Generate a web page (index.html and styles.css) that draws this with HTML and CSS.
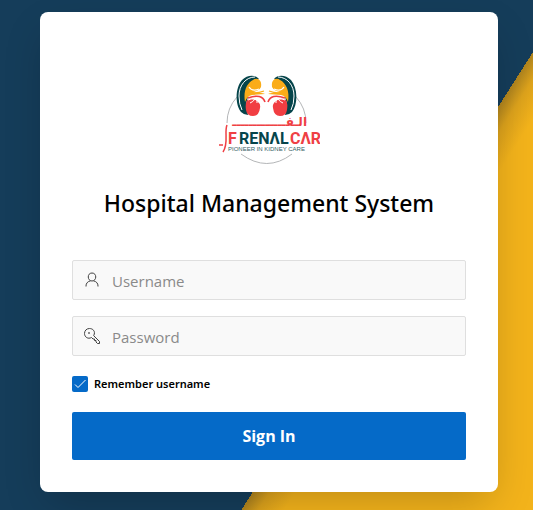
FILE: index.html
```html
<!DOCTYPE html>
<html lang="en">
<head>
<meta charset="utf-8">
<meta name="viewport" content="width=device-width, initial-scale=1">
<title>Hospital Management System</title>
<link rel="stylesheet" href="styles.css">
</head>
<body>
<main class="page">
  <form class="card">
    <svg class="logo" viewBox="0 0 101 92" role="img" aria-label="Renal Care">
      <g fill="none" stroke="#b4b6b8">
        <path d="M18 23Q8 34 8 49M77 23Q87 34 87 49"/>
        <path d="M22 80Q48 99 73 80"/>
      </g>
      <g id="kidney">
        <path fill="#06454b" d="M40 5C36 0 28 1 23 6C16 14 16 31 22 38Q25 41 29 41L27 30L33 8Z"/>
        <path fill="none" stroke="#fff" stroke-width="1" d="M36 3C27 3 20 11 20 22Q20 30 23 36"/>
        <path fill="#faac18" d="M34 6C28 9 24 17 26 28Q28 22 33 21L46 20Q44 19 42 19Q37 19 34 18Q40 17 42 13Q43 7 39 5Q36 4 34 6Z"/>
        <path fill="none" stroke="#fff" stroke-width="1.2" d="M30 13Q33 18 40 15"/>
        <path fill="none" stroke="#faac18" stroke-width="1.2" d="M30 18Q37 20 45 17"/>
        <path fill="#f13e42" d="M28 26Q33 23 38 27Q42 30 41 34Q40 42 34 42Q28 42 27 36Q26 30 28 26Z"/>
        <path fill="none" stroke="#fff" stroke-width="1" d="M29 26Q35 23 42 28M36 25Q34 28 31 29M38 26V29"/>
        <path fill="none" stroke="#f13e42" stroke-width="1.6" d="M29 24Q43 19 46 28"/>
      </g>
      <use href="#kidney" transform="matrix(-1 0 0 1 95 0)"/>
      <text class="logo-arabic" x="88" y="52" direction="rtl" lang="ar">الـفـــــــــــــ</text>
      <path fill="none" stroke="#ef4044" stroke-width="1.5" d="M0 71H4M8 51C5 58 10 69 4 78"/>
      <g class="logo-name">
        <text class="logo-red" x="9" y="70">F</text>
        <text class="logo-green" x="20" y="70">RENΛL</text>
        <text class="logo-red" x="71" y="70">CΛR</text>
      </g>
      <text class="logo-tagline" x="9" y="77">PIONEER IN KIDNEY CARE</text>
    </svg>
    <h1 class="title">Hospital Management System</h1>
    <div class="fields">
      <label class="field">
        <svg class="icon" viewBox="0 0 16 16" aria-hidden="true"><path d="M8 1C2.800 1 3.200 9 8 9S13.200 1 8 1ZM2 14.500V14Q2 10 6.500 8.800M14 14.500V14Q14 10 9.500 8.800"/></svg>
        <input class="input" type="text" placeholder="Username" aria-label="Username">
      </label>
      <label class="field">
        <svg class="icon" viewBox="0 0 16 16" aria-hidden="true"><path d="M9.700 7.700C12 3 8.500.5 5.500.5C2.500.5.5 2.700.5 5.500C.5 9 4 11.500 7.500 9.500L9 11H10.500V12.500H12V14L13.500 15.500H15.500V13.500Z"/><circle cx="5" cy="5" r=".5"/></svg>
        <input class="input" type="password" placeholder="Password" aria-label="Password">
      </label>
    </div>
    <div class="remember">
      <span class="check">
        <input class="check-box" id="remember" type="checkbox" checked>
        <svg class="check-mark" viewBox="0 0 16 16" aria-hidden="true"><path d="M3 8.500L6 11.500L13.500 4"/></svg>
      </span>
      <label for="remember">Remember username</label>
    </div>
    <button class="submit" type="submit">Sign In</button>
  </form>
</main>
</body>
</html>
```
FILE: styles.css
```css
* {
  box-sizing: border-box;
}

body {
  margin: 0;
  font-family: "Noto Sans", "Open Sans", sans-serif;
  color: #000;
}

.page {
  min-height: 100vh;
  padding: 12px 35px 18px 40px;
  background: linear-gradient(122.5deg, #153d5a 66%, #ae831e 66%, #dca21c 68%, #f3b31b 71%);
}

.card {
  display: flex;
  flex-direction: column;
  padding: 62px 32px 32px;
  border-radius: 8px;
  background: #fff;
  box-shadow: 0 16px 40px -8px rgb(0 0 0 / 22%);
}

.logo {
  align-self: center;
  width: 101px;
  height: 92px;
}

.logo-arabic {
  font: bold 12px "DejaVu Sans", sans-serif;
  fill: #ef4044;
}

.logo-name {
  font: bold 16px Roboto, sans-serif;
}

.logo-red {
  fill: #ef4044;
}

.logo-green {
  fill: #06454b;
}

.logo-tagline {
  font: 6px "Liberation Sans", sans-serif;
  fill: #345e64;
}

.title {
  margin: 20px 0 40px;
  font-size: 23px;
  font-weight: 500;
  line-height: 34px;
  text-align: center;
}

.fields {
  display: grid;
  gap: 16px;
}

.field {
  display: flex;
  align-items: center;
  gap: 12px;
  height: 40px;
  padding: 0 11px;
  border: 1px solid #dfdfdf;
  border-radius: 2px;
  background: #f9f9f9;
}

.icon {
  flex: none;
  width: 16px;
  height: 16px;
  fill: none;
  stroke: #404040;
}

.input {
  flex: 1;
  min-width: 0;
  padding: 2px 0 0;
  border: 0;
  outline: 0;
  background: none;
  font: 15px/24px "Open Sans", sans-serif;
}

.input::placeholder {
  color: #8a8a8a;
  opacity: 1;
}

.remember {
  display: flex;
  align-items: center;
  gap: 6px;
  height: 16px;
  margin: 20px 0;
  font-size: 11px;
  font-weight: 600;
  line-height: 16px;
}

.check {
  display: grid;
  width: 16px;
  height: 16px;
}

.check-box,
.check-mark {
  grid-area: 1 / 1;
  width: 16px;
  height: 16px;
}

.check-box {
  appearance: none;
  margin: 0;
  border-radius: 2px;
  background: #056ac8;
}

.check-mark {
  fill: none;
  stroke: #fff;
  pointer-events: none;
}

.submit {
  height: 48px;
  border: 0;
  border-radius: 2px;
  background: #056ac8;
  color: #fff;
  font: bold 16px/24px "Open Sans", sans-serif;
}
```
